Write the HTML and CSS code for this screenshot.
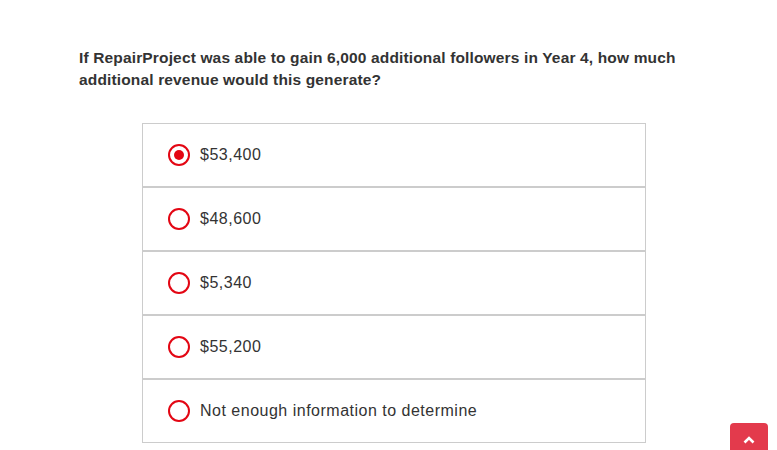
FILE: index.html
```html
<!DOCTYPE html>
<html>
<head>
<meta charset="utf-8">
<link rel="stylesheet" href="styles.css">
</head>
<body>
<main class="page">
  <p class="question">If RepairProject was able to gain 6,000 additional followers in Year 4, how much additional revenue would this generate?</p>
  <div class="options">
    <label class="option"><span class="radio checked"></span><span class="label">$53,400</span></label>
    <label class="option"><span class="radio"></span><span class="label">$48,600</span></label>
    <label class="option"><span class="radio"></span><span class="label">$5,340</span></label>
    <label class="option"><span class="radio"></span><span class="label">$55,200</span></label>
    <label class="option"><span class="radio"></span><span class="label">Not enough information to determine</span></label>
  </div>
</main>
<a class="to-top" href="#"><svg width="12" height="8" viewBox="0 0 12 8"><path d="M1.5 6.5 L6 2 L10.5 6.5" fill="none" stroke="#fff" stroke-width="2.6"/></svg></a>
</body>
</html>
```
FILE: styles.css
```css
html, body { margin: 0; padding: 0; background: #fff; }
body { font-family: "Liberation Sans", Arial, sans-serif; color: #333; overflow: hidden; height: 450px; }
.page { padding: 47px 0 0 79px; width: 620px; }
.question { margin: 0; font-size: 15.5px; font-weight: bold; line-height: 22px; letter-spacing: 0.15px; color: #333; }
.options { margin: 32px 0 0 63px; width: 504px; }
.option { display: flex; align-items: center; height: 62px; border: 1px solid #ccc; padding-left: 25px; box-sizing: content-box; }
.radio { width: 18px; height: 18px; border: 2px solid #e30613; border-radius: 50%; display: flex; align-items: center; justify-content: center; flex: none; }
.radio.checked::after { content: ""; width: 10px; height: 10px; border-radius: 50%; background: #e30613; }
.label { margin-left: 10px; font-size: 16px; letter-spacing: 0.5px; color: #333; }
.to-top { position: fixed; left: 730px; top: 423px; width: 38px; height: 40px; background: #e33a4c; border-radius: 4px; display: flex; justify-content: center; padding-top: 13px; box-sizing: border-box; }
```
